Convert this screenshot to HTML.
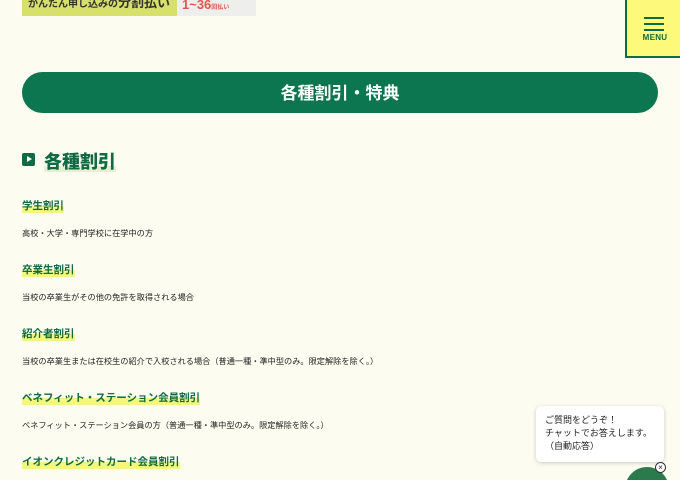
<!DOCTYPE html>
<html><head><meta charset="utf-8"><style>
*{margin:0;padding:0;box-sizing:border-box}
html,body{width:680px;height:480px;overflow:hidden}
body{background:#fcfcf0;font-family:"Liberation Sans","Noto Sans CJK JP",sans-serif;position:relative;color:#222}
.banner{position:absolute;left:22px;top:0;width:155px;height:16px;background:#d6e06a;font-size:10px;font-weight:bold;color:#333;line-height:6px;padding-left:6px;overflow:hidden;white-space:nowrap}
.banner2{position:absolute;left:177px;top:0;width:79px;height:16px;background:#eeeeec;color:#e5554f;font-size:13px;font-weight:bold;line-height:10px;padding-left:5px;overflow:hidden;white-space:nowrap}
.menu{position:absolute;left:625px;top:-4px;width:60px;height:62px;background:#fdf97a;border:2px solid #0e6b44}
.menu i{position:absolute;left:17px;width:20px;height:2px;background:#0e6b44}
.menu span{position:absolute;left:0;width:56px;top:35px;text-align:center;font-size:8px;font-weight:bold;color:#0e6b44;letter-spacing:.3px}
.bar{position:absolute;left:22px;top:72px;width:636px;height:41px;border-radius:21px;background:#0b7650;color:#fff;font-weight:bold;font-size:17px;text-align:center;line-height:43px}
.h2{position:absolute;left:22px;top:148px;font-size:18px;font-weight:bold;color:#0e6b44}
.h2 .ic{display:inline-block;width:13px;height:13px;background:#0e6b44;border-radius:2px;position:relative;vertical-align:2px;margin-right:9px}
.h2 .ic:after{content:"";position:absolute;left:5px;top:3px;border-left:5px solid #fff;border-top:3.5px solid transparent;border-bottom:3.5px solid transparent}
.h2 b{background:linear-gradient(transparent 70%,#e8eed0 70%)}
.h3{position:absolute;left:22px;font-size:10.5px;font-weight:bold;color:#0e6b44;background:linear-gradient(transparent 55%,#f5f77a 55%)}
.p{position:absolute;left:22px;font-size:8.2px;color:#222;white-space:nowrap}
.chat{position:absolute;left:536px;top:406px;width:128px;height:56px;background:#fff;border-radius:5px;box-shadow:0 1px 4px rgba(0,0,0,.2);font-size:9px;line-height:13px;padding:8px 0 0 9px;color:#222}
.clip{position:absolute;left:600px;top:440px;width:80px;height:40px;overflow:hidden}
.btn{position:absolute;left:25px;top:27px;width:44px;height:44px;border-radius:50%;background:#2b7a4e}
.x{position:absolute;left:55px;top:22px;width:11px;height:11px;border:1px solid #333;border-radius:50%;background:#fff;font-size:8px;line-height:9px;text-align:center}
</style></head><body>
<div class="banner">かんたん申し込みの<span style="font-size:13px">分割払い</span></div>
<div class="banner2">1~36<span style="font-size:6px">回払い</span></div>
<div class="menu"><i style="top:19px"></i><i style="top:25px"></i><i style="top:31px"></i><span>MENU</span></div>
<div class="bar">各種割引・特典</div>
<div class="h2"><span class="ic"></span><b>各種割引</b></div>
<div class="h3" style="top:198px">学生割引</div>
<div class="p" style="top:227px">高校・大学・専門学校に在学中の方</div>
<div class="h3" style="top:262px">卒業生割引</div>
<div class="p" style="top:291px">当校の卒業生がその他の免許を取得される場合</div>
<div class="h3" style="top:326px">紹介者割引</div>
<div class="p" style="top:355px">当校の卒業生または在校生の紹介で入校される場合（普通一種・準中型のみ。限定解除を除く。）</div>
<div class="h3" style="top:390px">ベネフィット・ステーション会員割引</div>
<div class="p" style="top:419px">ベネフィット・ステーション会員の方（普通一種・準中型のみ。限定解除を除く。）</div>
<div class="h3" style="top:454px">イオンクレジットカード会員割引</div>
<div class="chat">ご質問をどうぞ！<br>チャットでお答えします。<br>（自動応答）</div>
<div class="clip"><div class="btn"></div><div class="x">×</div></div>
</body></html>
